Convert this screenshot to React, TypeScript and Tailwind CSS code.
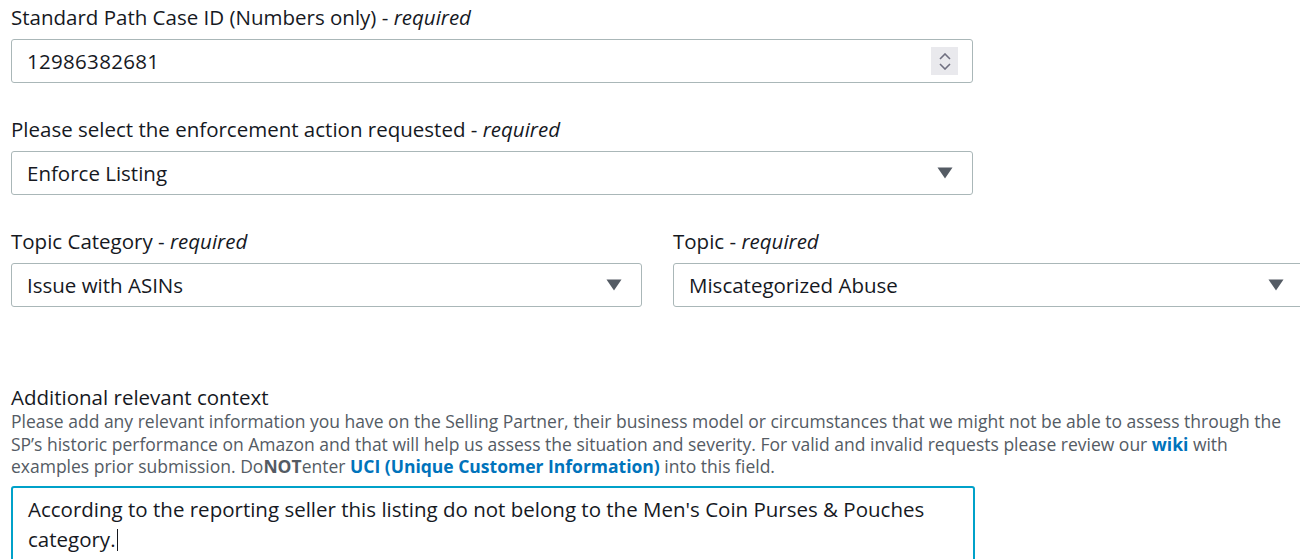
import React from "react";

const font = { fontFamily: "'Open Sans', 'Noto Sans', sans-serif" };

function Label({ text, required = true }: { text: string; required?: boolean }) {
  return (
    <div className="h-6 text-[20.5px] leading-6 text-[#16191f]">
      {text}
      {required && (
        <>
          {" - "}
          <i>required</i>
        </>
      )}
    </div>
  );
}

function Caret() {
  return (
    <svg width="16" height="12" viewBox="0 0 16 12" className="shrink-0">
      <path d="M0.5 0.5 H15.5 L8 11.5 Z" fill="#545b64" />
    </svg>
  );
}

function SelectBox({ value }: { value: string }) {
  return (
    <div className="mt-[10px] flex h-[44px] items-center justify-between rounded-[3px] border border-[#aab7b8] bg-white pl-[15px] pr-[19px] text-[20.5px] text-[#16191f]">
      <span>{value}</span>
      <Caret />
    </div>
  );
}

function Spinner() {
  return (
    <div className="flex h-[28px] w-[27px] flex-col items-center justify-center gap-[3px] bg-[#e9e9ed]">
      <svg width="12" height="7" viewBox="0 0 12 7">
        <path d="M1 6 L6 1 L11 6" fill="none" stroke="#6f6f80" strokeWidth="1.6" />
      </svg>
      <svg width="12" height="7" viewBox="0 0 12 7">
        <path d="M1 1 L6 6 L11 1" fill="none" stroke="#6f6f80" strokeWidth="1.6" />
      </svg>
    </div>
  );
}

export default function App() {
  return (
    <div className="h-[559px] w-[1300px] overflow-hidden bg-white" style={font}>
      <div className="w-[1304px] pl-[11px] pt-[5px]">
        <div className="w-[962px]">
          <Label text="Standard Path Case ID (Numbers only)" />
          <div className="mt-[10px] flex h-[44px] items-center justify-between rounded-[3px] border border-[#aab7b8] bg-white pl-[15px] pr-[14px] text-[20.5px] tracking-[0.3px] text-[#16191f]">
            <span>12986382681</span>
            <Spinner />
          </div>
        </div>

        <div className="mt-[34px] w-[962px]">
          <Label text="Please select the enforcement action requested" />
          <SelectBox value="Enforce Listing" />
        </div>

        <div className="mt-[34px] grid grid-cols-2 gap-[31px]">
          <div>
            <Label text="Topic Category" />
            <SelectBox value="Issue with ASINs" />
          </div>
          <div>
            <Label text="Topic" />
            <SelectBox value="Miscategorized Abuse" />
          </div>
        </div>

        <div className="mt-[78px]">
          <div className="h-6 text-[20.5px] leading-6 text-[#16191f]">Additional relevant context</div>
          <p className="mt-[1px] w-[1290px] whitespace-nowrap text-[17.5px] leading-[22.7px] text-[#545b64]">
            Please add any relevant information you have on the Selling Partner, their business model or
            circumstances that we might not be able to assess through the
            <br />
            SP’s historic performance on Amazon and that will help us assess the situation and severity. For valid
            and invalid requests please review our <b className="text-[#0073bb]">wiki</b> with
            <br />
            examples prior submission. Do<b>NOT</b>enter <b className="text-[#0073bb]">UCI (Unique Customer Information)</b>{" "}
            into this field.
          </p>
          <div className="mt-[8px] h-[90px] w-[964px] rounded-[3px] border-2 border-[#00a1c9] px-[15px] pt-[6px] text-[20.5px] leading-[30px] text-[#16191f]">
            According to the reporting seller this listing do not belong to the Men's Coin Purses &amp; Pouches
            <br />
            category.
            <span className="ml-[1px] inline-block h-[22px] w-px translate-y-[4px] bg-[#16191f]" />
          </div>
        </div>
      </div>
    </div>
  );
}
